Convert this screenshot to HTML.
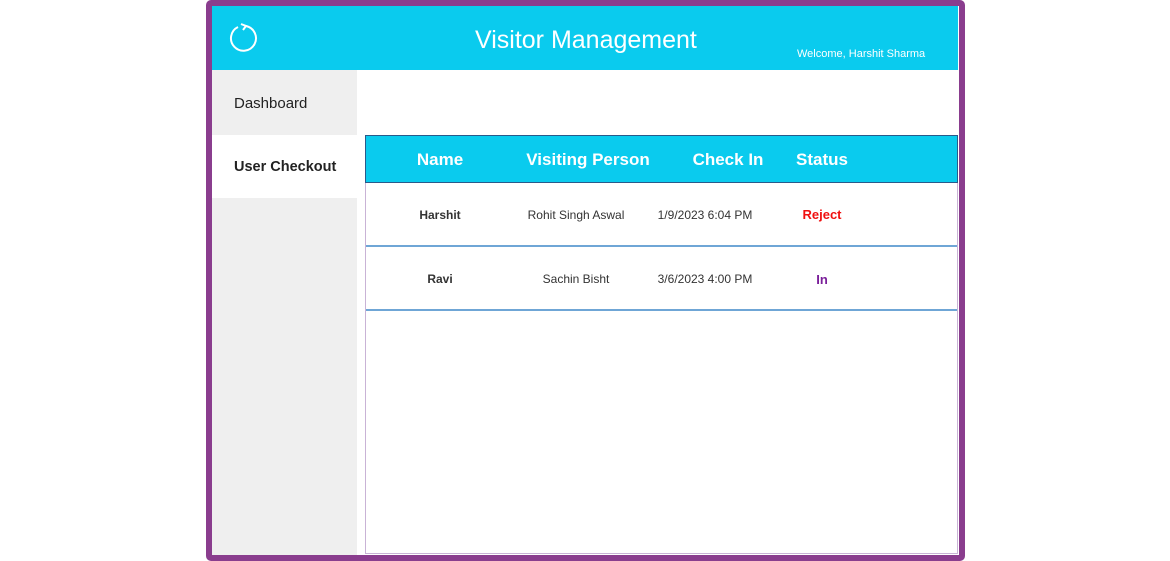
<!DOCTYPE html>
<html><head><style>
body{margin:0;width:1170px;height:561px;background:#fff;position:relative;overflow:hidden;font-family:"Liberation Sans",sans-serif}
.frame{position:absolute;left:206px;top:0;width:747px;height:549px;border:6px solid #8a3d8e;border-radius:5px;background:#fff}
.hdr{position:absolute;left:0;top:0;width:746px;height:64px;background:#0acbee;color:#fff}
.side{position:absolute;left:0;top:64px;width:145px;height:485px;background:#efefef}
.abs{position:absolute}
.tbl{position:absolute;left:153px;top:129px;width:591px;height:418px;border:1px solid #c9b3d6;border-top:none}
.th{position:absolute;top:0;height:48px;background:#0acbee;border:1px solid #2a5a8a;box-sizing:border-box;left:-1px;width:593px;color:#fff;font-weight:bold;font-size:17px;font-family:"Liberation Sans",sans-serif}
.c{position:absolute;transform:translateX(-50%);white-space:nowrap}
.row{position:absolute;left:0;width:591px;height:62px;border-bottom:2px solid #6fa6d6;font-size:12px;color:#333;font-family:"Liberation Sans",sans-serif}
</style></head><body>
<div class="frame">
 <div class="hdr">
  <svg class="abs" style="left:16px;top:17px" width="30" height="30" viewBox="0 0 30 30"><path d="M10 4 A12.5 12.5 0 1 0 18 3" fill="none" stroke="#fff" stroke-width="2"/><path d="M13 1 L18 3 L15 7" fill="none" stroke="#fff" stroke-width="2"/></svg>
  <div class="abs" style="left:263px;top:20px;font-size:25px">Visitor Management</div>
  <div class="abs" style="left:585px;top:42px;font-size:11px">Welcome, Harshit Sharma</div>
 </div>
 <div class="side">
  <div class="abs" style="left:22px;top:25px;font-size:15px;color:#222">Dashboard</div>
  <div class="abs" style="left:0;top:65px;width:145px;height:63px;background:#fff"></div>
  <div class="abs" style="left:22px;top:89px;font-size:14.5px;font-weight:bold;color:#222">User Checkout</div>
 </div>
 <div class="tbl">
  <div class="th">
   <span class="c" style="left:74px;top:14px">Name</span>
   <span class="c" style="left:222px;top:14px">Visiting Person</span>
   <span class="c" style="left:362px;top:14px">Check In</span>
   <span class="c" style="left:456px;top:14px">Status</span>
  </div>
  <div class="row" style="top:48px">
   <span class="c" style="left:74px;top:25px;font-weight:bold">Harshit</span>
   <span class="c" style="left:210px;top:25px">Rohit Singh Aswal</span>
   <span class="c" style="left:339px;top:25px">1/9/2023 6:04 PM</span>
   <span class="c" style="left:456px;top:24px;color:#f01010;font-weight:bold;font-size:13px">Reject</span>
  </div>
  <div class="row" style="top:112px">
   <span class="c" style="left:74px;top:25px;font-weight:bold">Ravi</span>
   <span class="c" style="left:210px;top:25px">Sachin Bisht</span>
   <span class="c" style="left:339px;top:25px">3/6/2023 4:00 PM</span>
   <span class="c" style="left:456px;top:25px;color:#7a1f9a;font-weight:bold;font-size:13px">In</span>
  </div>
 </div>
</div>
</body></html>
